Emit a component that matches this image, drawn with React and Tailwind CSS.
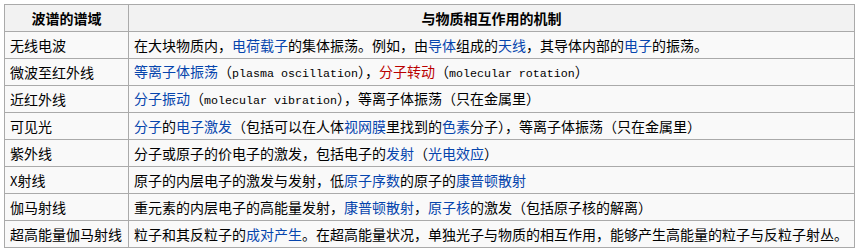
const L = ({ children }) => <span className="text-[#0645ad]">{children}</span>;
const R = ({ children }) => <span className="text-[#ba0000]">{children}</span>;
const M = ({ children }) => (
  <span className="text-[11.67px]" style={{ fontFamily: '"Liberation Mono", monospace' }}>
    {children}
  </span>
);

const rows = [
  [
    '无线电波',
    <>在大块物质内，<L>电荷载子</L>的集体振荡。例如，由<L>导体</L>组成的<L>天线</L>，其导体内部的<L>电子</L>的振荡。</>,
  ],
  [
    '微波至红外线',
    <><L>等离子体振荡</L>（<M>plasma oscillation</M>），<R>分子转动</R>（<M>molecular rotation</M>）</>,
  ],
  [
    '近红外线',
    <><L>分子振动</L>（<M>molecular vibration</M>），等离子体振荡（只在金属里）</>,
  ],
  [
    '可见光',
    <><L>分子</L>的<L>电子激发</L>（包括可以在人体<L>视网膜</L>里找到的<L>色素</L>分子），等离子体振荡（只在金属里）</>,
  ],
  [
    '紫外线',
    <>分子或原子的价电子的激发，包括电子的<L>发射</L>（<L>光电效应</L>）</>,
  ],
  [
    <><span className="text-[13px]">X</span>射线</>,
    <>原子的内层电子的激发与发射，低<L>原子序数</L>的原子的<L>康普顿散射</L></>,
  ],
  [
    '伽马射线',
    <>重元素的内层电子的高能量发射，<L>康普顿散射</L>，<L>原子核</L>的激发（包括原子核的解离）</>,
  ],
  [
    '超高能量伽马射线',
    <>粒子和其反粒子的<L>成对产生</L>。在超高能量状况，单独光子与物质的相互作用，能够产生高能量的粒子与反粒子射丛。</>,
  ],
];

export default function App() {
  return (
    <div
      className="w-[862px] h-[252px] bg-white pt-[4px] pl-[4px]"
      style={{ fontFamily: '"Noto Sans CJK SC", "Liberation Sans", sans-serif' }}
    >
      <table className="w-[851px] border-collapse border border-[#aaaaaa] bg-[#f9f9f9] text-[14px] text-black">
        <thead>
          <tr className="h-[27px] bg-[#f2f2f2]">
            <th className="w-[124px] border border-[#aaaaaa] px-[5px] py-0 font-bold text-center leading-none">
              波谱的谱域
            </th>
            <th className="border border-[#aaaaaa] px-[5px] py-0 font-bold text-center leading-none">
              与物质相互作用的机制
            </th>
          </tr>
        </thead>
        <tbody>
          {rows.map(([band, mech], i) => (
            <tr key={i} className="h-[27px]">
              <td className="border border-[#aaaaaa] px-[5px] py-0 whitespace-nowrap leading-none">{band}</td>
              <td className="border border-[#aaaaaa] px-[5px] py-0 whitespace-nowrap leading-none">{mech}</td>
            </tr>
          ))}
        </tbody>
      </table>
    </div>
  );
}
